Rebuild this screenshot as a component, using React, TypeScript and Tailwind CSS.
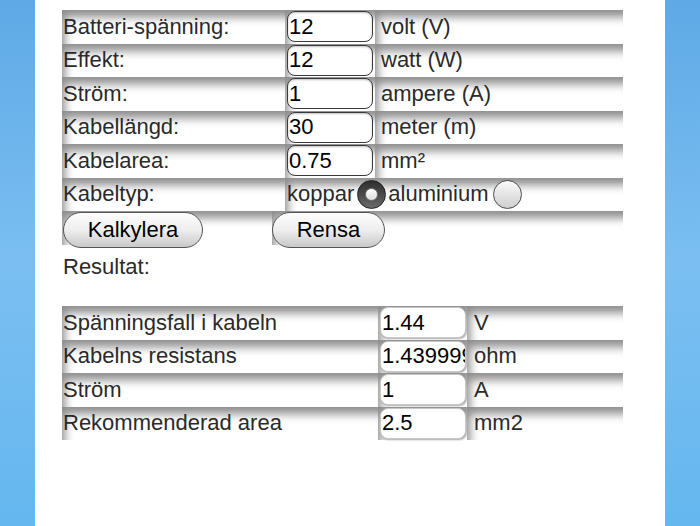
const font = "font-['Liberation_Sans',Arial,sans-serif]";
const cell = 'h-full flex items-center shadow-[inset_6px_10px_10px_-3px_rgba(0,0,0,0.45)] bg-white';

function Field({ value }: { value: string }) {
  return (
    <div className="ml-[2px] flex h-[31px] w-[86px] items-center rounded-[8px] border-[1.5px] border-[#3a3a3a] bg-white pl-[1px] text-[22px] text-black shadow-[inset_0_1px_2px_rgba(0,0,0,0.25)]">
      {value}
    </div>
  );
}

function OutField({ value }: { value: string }) {
  return (
    <div className="ml-[2px] flex h-[31px] w-[86px] items-center overflow-hidden whitespace-nowrap rounded-[8px] border border-[#c8c8c8] bg-white pl-[1px] text-[22px] text-black shadow-[1px_1px_2px_rgba(0,0,0,0.35)]">
      {value}
    </div>
  );
}

function InputRow({ label, value, unit }: { label: string; value: string; unit: string }) {
  return (
    <div className="flex h-[33.5px]">
      <div className={`${cell} w-[223px] pl-[1px]`}>{label}</div>
      <div className={`${cell} w-[90px]`}>
        <Field value={value} />
      </div>
      <div className={`${cell} w-[248px] pl-[6px]`}>{unit}</div>
    </div>
  );
}

function ResultRow({ label, value, unit }: { label: string; value: string; unit: string }) {
  return (
    <div className="flex h-[33.5px]">
      <div className={`${cell} w-[316px] pl-[1px]`}>{label}</div>
      <div className={`${cell} w-[89px]`}>
        <OutField value={value} />
      </div>
      <div className={`${cell} w-[156px] pl-[7px]`}>{unit}</div>
    </div>
  );
}

function Radio({ checked }: { checked?: boolean }) {
  if (checked) {
    return (
      <div className="mx-[3px] flex h-[29px] w-[29px] items-center justify-center rounded-full border border-[#222] bg-gradient-to-b from-[#2e2e2e] to-[#6a6a6a]">
        <div className="h-[13px] w-[13px] rounded-full border border-[#777] bg-gradient-to-b from-white to-[#ddd]" />
      </div>
    );
  }
  return (
    <div className="mx-[4px] h-[29px] w-[29px] rounded-full border-[1.5px] border-[#4a4a4a] bg-gradient-to-b from-[#fafafa] to-[#cfcfcf]" />
  );
}

function Pill({ children, w }: { children: string; w: string }) {
  return (
    <div
      className={`${w} flex h-[36px] items-center justify-center rounded-full border-[1.5px] border-[#555] bg-gradient-to-b from-[#fdfdfd] via-[#eeeeee] to-[#c9c9c9] text-[22px] text-black`}
    >
      {children}
    </div>
  );
}

export default function App() {
  return (
    <div className={`${font} flex h-[526px] w-[700px] overflow-hidden bg-gradient-to-b from-[#5ea9e6] via-[#7bbff2] to-[#64b7ef]`}>
      <div className="ml-[35px] h-full w-[630px] bg-white pl-[27px] pt-[10px] text-[22px] leading-none text-[#2a2a2a]">
        <InputRow label="Batteri-spänning:" value="12" unit="volt (V)" />
        <InputRow label="Effekt:" value="12" unit="watt (W)" />
        <InputRow label="Ström:" value="1" unit="ampere (A)" />
        <InputRow label="Kabellängd:" value="30" unit="meter (m)" />
        <InputRow label="Kabelarea:" value="0.75" unit="mm²" />
        <div className="flex h-[33.5px]">
          <div className={`${cell} w-[223px] pl-[1px]`}>Kabeltyp:</div>
          <div className={`${cell} w-[338px] pl-[2px]`}>
            <span>koppar</span>
            <Radio checked />
            <span className="-ml-[1px]">aluminium</span>
            <Radio />
          </div>
        </div>
        <div className="flex h-[33.5px]">
          <div className={`${cell} w-[210px] items-start pl-[1px] pt-[1px]`}>
            <Pill w="w-[140px]">Kalkylera</Pill>
          </div>
          <div className={`${cell} w-[351px] items-start pt-[1px]`}>
            <Pill w="w-[113px]">Rensa</Pill>
          </div>
        </div>
        <div className="flex h-[44px] items-center pl-[1px]">Resultat:</div>
        <div className="pt-[17.5px]">
          <ResultRow label="Spänningsfall i kabeln" value="1.44" unit="V" />
          <ResultRow label="Kabelns resistans" value="1.4399999" unit="ohm" />
          <ResultRow label="Ström" value="1" unit="A" />
          <ResultRow label="Rekommenderad area" value="2.5" unit="mm2" />
        </div>
      </div>
    </div>
  );
}
